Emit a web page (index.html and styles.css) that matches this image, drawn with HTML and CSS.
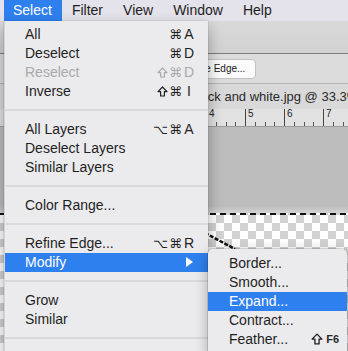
FILE: index.html
```html
<!DOCTYPE html>
<html>
<head>
<meta charset="utf-8">
<link rel="stylesheet" href="styles.css">
</head>
<body>
<div class="menubar">
  <span class="mb-item active">Select</span>
  <span class="mb-item">Filter</span>
  <span class="mb-item">View</span>
  <span class="mb-item">Window</span>
  <span class="mb-item">Help</span>
</div>

<div class="app">
  <div class="toolbar"></div>
  <div class="options">
    <span class="opt-btn">Refine Edge...</span>
  </div>
  <div class="tabs"><span class="tab-title">Black and white.jpg @ 33.3% (RGB/8)</span></div>
  <div class="ruler">
    <div class="seg"><span class="num">0</span></div>
    <div class="seg"><span class="num">1</span></div>
    <div class="seg"><span class="num">2</span></div>
    <div class="seg"><span class="num">3</span></div>
    <div class="seg"><span class="num">4</span></div>
    <div class="seg"><span class="num">5</span></div>
    <div class="seg"><span class="num">6</span></div>
    <div class="seg"><span class="num">7</span></div>
  </div>
  <div class="canvas">
    <div class="glow"></div>
    <div class="doc">
      <div class="ants"></div>
      <svg class="edge" width="40" height="24" viewBox="0 0 40 24">
        <path d="M2 3 L32 19" stroke="#111" stroke-width="2.5" stroke-dasharray="4 1.5" fill="none"/>
      </svg>
    </div>
  </div>
</div>

<div class="menu">
  <div class="row"><span class="label">All</span><span class="sc"><span class="mods">⌘</span><span class="key">A</span></span></div>
  <div class="row"><span class="label">Deselect</span><span class="sc"><span class="mods">⌘</span><span class="key">D</span></span></div>
  <div class="row disabled"><span class="label">Reselect</span><span class="sc"><svg class="shift" width="11" height="11" viewBox="0 0 11 11"><path d="M5.5 1 L10 5.6 H7.4 V10 H3.6 V5.6 H1 Z" fill="none" stroke="currentColor" stroke-width="1.2" stroke-linejoin="round"/></svg><span class="mods">⌘</span><span class="key">D</span></span></div>
  <div class="row"><span class="label">Inverse</span><span class="sc"><svg class="shift" width="11" height="11" viewBox="0 0 11 11"><path d="M5.5 1 L10 5.6 H7.4 V10 H3.6 V5.6 H1 Z" fill="none" stroke="currentColor" stroke-width="1.2" stroke-linejoin="round"/></svg><span class="mods">⌘</span><span class="key">I</span></span></div>
  <div class="sep"></div>
  <div class="row"><span class="label">All Layers</span><span class="sc"><span class="mods">⌥⌘</span><span class="key">A</span></span></div>
  <div class="row"><span class="label">Deselect Layers</span></div>
  <div class="row"><span class="label">Similar Layers</span></div>
  <div class="sep"></div>
  <div class="row"><span class="label">Color Range...</span></div>
  <div class="sep"></div>
  <div class="row"><span class="label">Refine Edge...</span><span class="sc"><span class="mods">⌥⌘</span><span class="key">R</span></span></div>
  <div class="row selected"><span class="label">Modify</span><span class="arrow"></span></div>
  <div class="sep"></div>
  <div class="row"><span class="label">Grow</span></div>
  <div class="row"><span class="label">Similar</span></div>
  <div class="sep"></div>
</div>

<div class="submenu">
  <div class="row sub"><span class="label">Border...</span></div>
  <div class="row sub"><span class="label">Smooth...</span></div>
  <div class="row sub selected"><span class="label">Expand...</span></div>
  <div class="row sub"><span class="label">Contract...</span></div>
  <div class="row sub"><span class="label">Feather...</span><span class="sc2"><svg class="shift big" width="12" height="12" viewBox="0 0 11 11"><path d="M5.5 1 L10 5.6 H7.4 V10 H3.6 V5.6 H1 Z" fill="none" stroke="currentColor" stroke-width="1.2" stroke-linejoin="round"/></svg><span class="fkey">F6</span></span></div>
</div>
</body>
</html>
```

FILE: styles.css
```css
html, body {
  margin: 0;
  padding: 0;
}
body {
  width: 348px;
  height: 351px;
  overflow: hidden;
  position: relative;
  background: #bdbdbd;
  font-family: "Liberation Sans", Arial, sans-serif;
  color: #222;
}

/* menu bar */
.menubar {
  height: 21px;
  background: #e4e2ea;
  display: flex;
  padding-left: 4px;
  font-size: 14px;
  line-height: 21px;
  color: #1e1e1e;
}
.mb-item {
  padding: 0 10px;
  white-space: nowrap;
}
.mb-item.active {
  background: #2f80ef;
  color: #fff;
  padding-left: 9px;
}

/* app behind the menus */
.app {
  display: flex;
  flex-direction: column;
}
.toolbar {
  height: 32px;
  background: linear-gradient(#d9d9d9, #d2d2d2);
  border-bottom: 1px solid #7e7e7e;
}
.options {
  height: 30px;
  background: #dcdcdc;
  border-bottom: 1px solid #b4b4b4;
  display: flex;
  align-items: center;
  padding-left: 173px;
  box-sizing: border-box;
}
.opt-btn {
  height: 18px;
  line-height: 18px;
  padding: 0 10px 0 8px;
  background: #fbfbfb;
  border: 1px solid #c2c2c2;
  border-radius: 4px;
  font-size: 10px;
  color: #222;
  white-space: nowrap;
}
.tabs {
  height: 25px;
  background: #d9d9d9;
  padding-left: 189px;
  white-space: nowrap;
  overflow: hidden;
}
.tab-title {
  font-size: 13px;
  line-height: 25px;
  color: #2a2a2a;
}
.ruler {
  height: 17px;
  background: #e2e2e2;
  border-bottom: 1px solid #9c9c9c;
  display: flex;
  padding-left: 50px;
  overflow: hidden;
}
.seg {
  flex: 0 0 39px;
  height: 17px;
  border-left: 1px solid #444;
  box-sizing: border-box;
  background-image: repeating-linear-gradient(to right, transparent 0 8.75px, #555 8.75px 9.75px);
  background-size: 100% 4px;
  background-position: left bottom;
  background-repeat: no-repeat;
}
.num {
  display: block;
  font-size: 10px;
  line-height: 10px;
  padding-left: 2px;
  color: #222;
}
.canvas {
  flex: 1;
  height: 240px;
  background: #bdbdbd;
  padding-top: 80px;
  box-sizing: border-box;
}
.glow {
  height: 6px;
  background: linear-gradient(#bfbfbf, #d4d4d4);
}
.doc {
  position: relative;
  height: 140px;
  background-color: #ffffff;
  background-image: conic-gradient(#d2d2d2 25%, transparent 0 50%, #d2d2d2 0 75%, transparent 0);
  background-size: 16px 16px;
  background-position: 0 2px;
}
.ants {
  height: 2px;
  background: repeating-linear-gradient(to right, #111 0 6px, transparent 6px 10px);
}
.edge {
  position: absolute;
  left: 203px;
  top: 17px;
}

/* main menu */
.menu {
  position: absolute;
  left: 4px;
  top: 21px;
  width: 204px;
  height: 340px;
  padding-top: 3.5px;
  box-sizing: border-box;
  background: #ebebed;
  border-left: 1px solid #d4d4d6;
  box-shadow: 0 6px 14px rgba(0, 0, 0, 0.32), 0 0 1px rgba(0, 0, 0, 0.3);
  font-size: 14px;
}
.row {
  height: 19px;
  line-height: 19px;
  display: flex;
  align-items: center;
  padding-left: 20px;
  padding-right: 13px;
  white-space: nowrap;
  color: #1f1f1f;
}
.row .label {
  flex: 1;
}
.row.disabled {
  color: #a9a9ab;
}
.row.selected {
  background: #2f80ef;
  color: #fff;
}
.sep {
  height: 2px;
  margin: 8.5px 0;
  background: #d9d9db;
}
.sc {
  display: flex;
  align-items: center;
}
.shift {
  display: block;
  margin-right: 1px;
}
.shift.big {
  margin-right: 3px;
}
.mods {
  font-family: "DejaVu Sans", sans-serif;
  font-size: 13px;
  letter-spacing: 1px;
  text-align: right;
}
.key {
  width: 12px;
  text-align: center;
  font-size: 14px;
}
.arrow {
  width: 0;
  height: 0;
  border-top: 5px solid transparent;
  border-bottom: 5px solid transparent;
  border-left: 7px solid #fff;
  margin-right: 2px;
}

/* submenu */
.submenu {
  position: absolute;
  left: 208px;
  top: 248.5px;
  width: 139px;
  height: 110px;
  padding-top: 5px;
  box-sizing: border-box;
  background: #ebebed;
  border-radius: 5px;
  box-shadow: 0 4px 14px rgba(0, 0, 0, 0.3), 0 0 0 1px rgba(0, 0, 0, 0.12);
  font-size: 14px;
}
.row.sub {
  padding-left: 21px;
  padding-right: 8px;
}
.sc2 {
  display: flex;
  align-items: center;
}
.fkey {
  font-size: 11px;
  font-weight: bold;
  color: #2a2a2a;
}
```
